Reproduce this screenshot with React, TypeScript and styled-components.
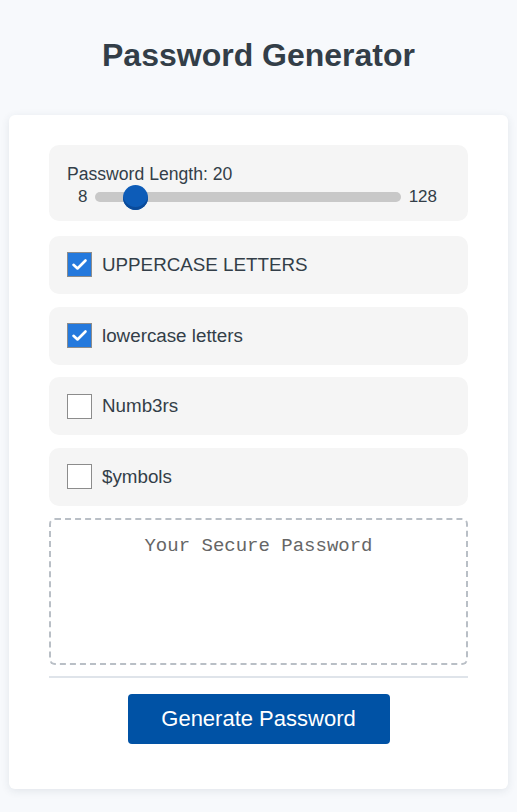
import React, { useState } from 'react';
import styled, { createGlobalStyle } from 'styled-components';

const GlobalStyle = createGlobalStyle`
    body {
        margin: 0;
        background: #f7f9fc;
        font-family: 'Liberation Sans', Arial, sans-serif;
        color: #333e48;
    }
`;

const Page = styled.div`
    display: flex;
    flex-direction: column;
    align-items: center;
    padding: 0 9px 22px;
`;

const Title = styled.h1`
    margin: 36px 0 41px;
    font-size: 32px;
    line-height: 38px;
    font-weight: 700;
    color: #333e48;
`;

const Card = styled.div`
    box-sizing: border-box;
    width: 100%;
    background: #ffffff;
    border-radius: 6px;
    box-shadow: 0 2px 8px rgba(40, 55, 80, 0.1);
    padding: 30px 40px 45px;
    display: flex;
    flex-direction: column;
    gap: 12.6px;
`;

const LengthBox = styled.div`
    background: #f5f5f5;
    border-radius: 10px;
    height: 76px;
    box-sizing: border-box;
    padding: 19px 31px 0 18px;
    margin-bottom: 2.4px;
`;

const LengthLabel = styled.div`
    font-size: 17.6px;
    line-height: 20px;
`;

const SliderRow = styled.div`
    display: flex;
    align-items: center;
    gap: 8px;
    margin-top: 1px;
    font-size: 17px;
    line-height: 24px;
    padding-left: 11px;
`;

const Range = styled.input`
    -webkit-appearance: none;
    appearance: none;
    flex: 1;
    margin: 0;
    height: 10px;
    border-radius: 5px;
    background: #c8c8c8;
    outline: none;

    &::-webkit-slider-thumb {
        -webkit-appearance: none;
        width: 25px;
        height: 25px;
        border-radius: 50%;
        background: #0d5cb8;
        box-shadow: inset 0 -3px 0 #0a4b9a;
        cursor: pointer;
    }
`;

const OptionRow = styled.label`
    display: flex;
    align-items: center;
    gap: 10px;
    height: 58px;
    padding: 0 18px;
    background: #f5f5f5;
    border-radius: 10px;
    font-size: 18.8px;
    cursor: pointer;
`;

const Box = styled.span<{ checked: boolean }>`
    box-sizing: border-box;
    width: 25px;
    height: 25px;
    display: flex;
    align-items: center;
    justify-content: center;
    border: 1px solid #8c8c8c;
    background: ${props => (props.checked ? '#2479dd' : '#ffffff')};
`;

const Output = styled.textarea`
    box-sizing: border-box;
    height: 147px;
    border: 2px dashed #b9bfc6;
    border-radius: 6px;
    resize: none;
    padding: 14px;
    font-family: 'Liberation Mono', 'Courier New', monospace;
    font-size: 19px;
    line-height: 24px;
    text-align: center;
    color: #333;
    outline: none;

    &::placeholder {
        color: #666666;
    }
`;

const Divider = styled.hr`
    width: 100%;
    margin: -1.6px 0 3.4px;
    border: none;
    height: 2px;
    background: #dfe4ea;
`;

const Button = styled.button`
    align-self: center;
    width: 262px;
    height: 50px;
    border: none;
    border-radius: 4px;
    background: #0052a5;
    color: #ffffff;
    font-family: 'Liberation Sans', Arial, sans-serif;
    font-size: 22px;
    cursor: pointer;
`;

const options = [
    { key: 'upper', label: 'UPPERCASE LETTERS', chars: 'ABCDEFGHIJKLMNOPQRSTUVWXYZ' },
    { key: 'lower', label: 'lowercase letters', chars: 'abcdefghijklmnopqrstuvwxyz' },
    { key: 'numbers', label: 'Numb3rs', chars: '0123456789' },
    { key: 'symbols', label: '$ymbols', chars: '!@#$%^&*()-_=+[]{};:,.<>?' },
];

const Check = () => (
    <svg width="17" height="17" viewBox="0 0 17 17">
        <path d="M2.5 8.8 L6.5 12.5 L14.5 4.5" fill="none" stroke="#fff" strokeWidth="2.6" strokeLinecap="round" strokeLinejoin="round" />
    </svg>
);

const App = () => {
    const [length, setLength] = useState(20);
    const [enabled, setEnabled] = useState<Record<string, boolean>>({ upper: true, lower: true, numbers: false, symbols: false });
    const [password, setPassword] = useState('');

    const generate = () => {
        const pool = options.filter(o => enabled[o.key]).map(o => o.chars).join('');
        if (!pool) return;
        let out = '';
        for (let i = 0; i < length; i++) out += pool[Math.floor(Math.random() * pool.length)];
        setPassword(out);
    };

    return (
        <Page>
            <GlobalStyle />
            <Title>Password Generator</Title>
            <Card>
                <LengthBox>
                    <LengthLabel>Password Length: {length}</LengthLabel>
                    <SliderRow>
                        <span>8</span>
                        <Range type="range" min={8} max={128} value={length} onChange={e => setLength(Number(e.target.value))} />
                        <span>128</span>
                    </SliderRow>
                </LengthBox>
                {options.map(o => (
                    <OptionRow key={o.key} onClick={() => setEnabled({ ...enabled, [o.key]: !enabled[o.key] })}>
                        <Box checked={enabled[o.key]}>{enabled[o.key] && <Check />}</Box>
                        {o.label}
                    </OptionRow>
                ))}
                <Output readOnly value={password} placeholder="Your Secure Password" />
                <Divider />
                <Button onClick={generate}>Generate Password</Button>
            </Card>
        </Page>
    );
};

export default App;
